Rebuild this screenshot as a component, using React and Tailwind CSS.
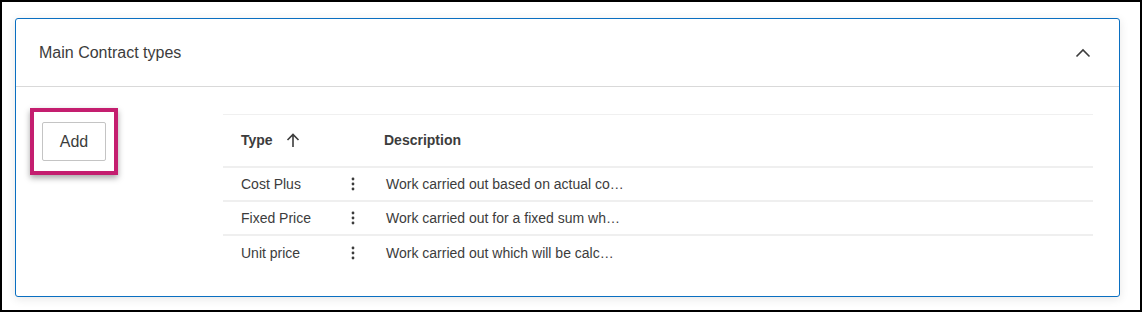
import React from "react";

const rows = [
  ["Cost Plus", "Work carried out based on actual co…"],
  ["Fixed Price", "Work carried out for a fixed sum wh…"],
  ["Unit price", "Work carried out which will be calc…"],
];

function Kebab() {
  return (
    <svg width="4" height="14" viewBox="0 0 4 14" className="block">
      <circle cx="2" cy="2" r="1.4" fill="#3c3c3c" />
      <circle cx="2" cy="7" r="1.4" fill="#3c3c3c" />
      <circle cx="2" cy="12" r="1.4" fill="#3c3c3c" />
    </svg>
  );
}

export default function App() {
  return (
    <div
      className="w-[1142px] h-[312px] border-2 border-black bg-white pl-[13px] pt-[16px] overflow-hidden"
      style={{ fontFamily: '"Liberation Sans", Arial, sans-serif' }}
    >
      <div className="w-[1105px] h-[279px] border-[1.5px] border-[#0a6fc1] rounded-[3px] bg-white shadow-[0_2px_10px_rgba(0,0,0,0.10)]">
        <div className="h-[68px] flex items-center justify-between pl-[23px] pr-[28px] border-b border-[#d9d9d9]">
          <span className="text-[16px] text-[#3c3c3c]">Main Contract types</span>
          <svg width="16" height="10" viewBox="0 0 16 10" className="block">
            <path d="M1.5 8.5 L8 2 L14.5 8.5" fill="none" stroke="#3c3c3c" strokeWidth="1.6" />
          </svg>
        </div>
        <div className="flex pl-[14px] pt-[21px]">
          <div className="w-[88px] h-[67px] border-4 border-[#c41e6f] shadow-[0_3px_6px_rgba(0,0,0,0.35)] flex items-center justify-center shrink-0">
            <button className="w-[64px] h-[39px] border border-[#c4c4c4] rounded-[2px] bg-white text-[16px] text-[#3c3c3c]">
              Add
            </button>
          </div>
          <div className="ml-[105px] mt-[6px] w-[870px]">
            <div className="h-[54px] border-t border-[#f0f0f0] border-b-2 border-b-[#efefef] flex items-center">
              <div className="w-[118px] pl-[18px] flex items-center gap-[13px] text-[14px] font-bold text-[#3c3c3c]">
                <span>Type</span>
                <svg width="14" height="15" viewBox="0 0 14 15" className="block">
                  <path d="M7 14 V1.5 M1.5 7 L7 1.5 L12.5 7" fill="none" stroke="#3c3c3c" strokeWidth="1.6" />
                </svg>
              </div>
              <div className="w-[24px]" />
              <div className="pl-[19px] text-[14px] font-bold text-[#3c3c3c]">Description</div>
            </div>
            {rows.map(([t, d], i) => (
              <div
                key={t}
                className={`h-[34px] flex items-center text-[14px] text-[#3c3c3c] ${
                  i < rows.length - 1 ? "border-b-2 border-[#efefef]" : ""
                }`}
              >
                <div className="w-[118px] pl-[18px]">{t}</div>
                <div className="w-[24px] flex justify-center">
                  <Kebab />
                </div>
                <div className="pl-[21px]">{d}</div>
              </div>
            ))}
          </div>
        </div>
      </div>
    </div>
  );
}
